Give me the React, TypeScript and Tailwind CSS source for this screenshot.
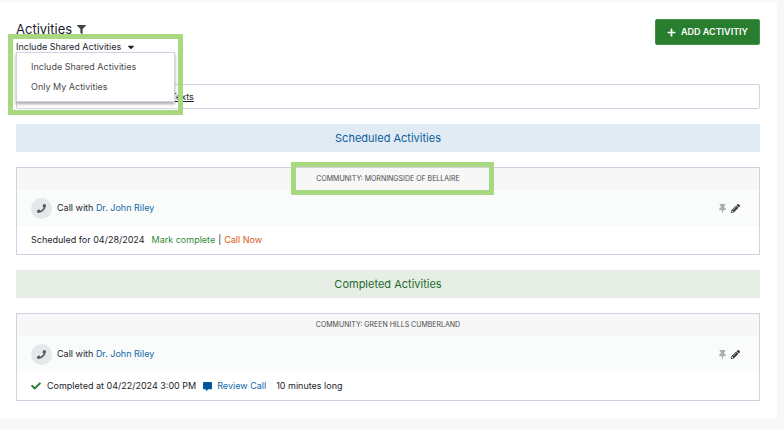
import { useState } from 'react'
import type { ReactNode } from 'react'
import {
  FaCaretDown,
  FaCheck,
  FaCommentAlt,
  FaFilter,
  FaPencilAlt,
  FaPhone,
  FaPlus,
  FaThumbtack,
} from 'react-icons/fa'

const scopes = ['Include Shared Activities', 'Only My Activities']

interface ActivityCardProps {
  community: string
  contact: string
  highlighted?: boolean
  children: ReactNode
}

function ActivityCard({ community, contact, highlighted, children }: ActivityCardProps) {
  return (
    <article className="border border-[#d3d0e2] bg-white">
      <header className="flex h-[22px] items-center justify-center bg-[#f7f7f7]">
        <div className="relative text-[7px] leading-3 text-[#4a4a4a]">
          {community}
          {highlighted && (
            <span className="pointer-events-none absolute -top-[11px] -right-[34px] -bottom-[10px] -left-[25px] border-5 border-[#a8d880]" />
          )}
        </div>
      </header>
      <div className="flex h-9 items-center justify-between bg-[#fafcfb] px-[14px]">
        <div className="flex items-center">
          <span className="mr-[5px] flex size-[21px] items-center justify-center rounded-full bg-[#e4e8eb]">
            <FaPhone className="size-[9px] text-[#5a5a5a]" />
          </span>
          <p>
            Call with{' '}
            <a href="#contact" className="text-[#1467a8]">
              {contact}
            </a>
          </p>
        </div>
        <div className="flex items-center gap-1 pr-[5px]">
          <button type="button" aria-label="Pin activity">
            <FaThumbtack className="size-[9px] text-[#a5adb5]" />
          </button>
          <button type="button" aria-label="Edit activity">
            <FaPencilAlt className="size-[9px] text-[#333333]" />
          </button>
        </div>
      </div>
      <footer className="flex h-7 items-center px-[14px]">{children}</footer>
    </article>
  )
}

export default function App() {
  const [open, setOpen] = useState(true)
  const [scope, setScope] = useState(scopes[0])

  const handleSelect = (value: string) => {
    setScope(value)
    setOpen(false)
  }

  return (
    <div className="min-h-screen bg-[#f8f8f8] pt-0.5 pr-[7px] font-['Inter',sans-serif] text-[9px] leading-4 text-[#1d1d2b]">
      <main className="flex flex-col gap-[15px] bg-white py-[17px] pr-[17px] pl-4">
        <header className="mb-[14px] flex items-start justify-between">
          <div>
            <div className="flex h-5 items-center gap-[5px]">
              <h1 className="text-[13px] leading-5">Activities</h1>
              <button type="button" aria-label="Filter activities">
                <FaFilter className="size-[9px] text-[#444444]" />
              </button>
            </div>
            <div className="relative">
              <button
                type="button"
                aria-haspopup="menu"
                aria-expanded={open}
                onClick={() => setOpen(!open)}
                className="flex items-center gap-[5px]"
              >
                {scope}
                <FaCaretDown className="size-[10px]" />
              </button>
              {open && (
                <ul
                  role="menu"
                  className="absolute top-[13px] left-0 z-10 w-[159px] border border-[#d3d0e2] bg-white py-1 shadow-[0_2px_3px_rgba(0,0,0,0.35)]"
                >
                  {scopes.map((item) => (
                    <li key={item} role="none">
                      <button
                        type="button"
                        role="menuitem"
                        onClick={() => handleSelect(item)}
                        className="h-5 w-full px-[14px] text-left text-[#4a4a4a]"
                      >
                        {item}
                      </button>
                    </li>
                  ))}
                </ul>
              )}
              <span className="pointer-events-none absolute -top-[5px] -left-2 z-20 h-[81px] w-[175px] border-5 border-[#a8d880]" />
            </div>
          </div>
          <button
            type="button"
            className="flex h-[26px] items-center gap-[5px] rounded-xs border border-[#43914a] bg-[#287d2e] px-[11px] font-semibold text-white"
          >
            <FaPlus className="size-[9px]" />
            ADD ACTIVITIY
          </button>
        </header>

        <nav className="flex h-[25px] items-center rounded-xs border border-[#d3d0e2] pl-[154px]">
          <a href="#texts" className="underline">
            Texts
          </a>
        </nav>

        <h2 className="bg-[#e1ebf4] text-center text-[11px] leading-7 text-[#0b5ca0]">Scheduled Activities</h2>
        <ActivityCard community="COMMUNITY: MORNINGSIDE OF BELLAIRE" contact="Dr. John Riley" highlighted>
          <span className="mr-[7px]">Scheduled for 04/28/2024</span>
          <button type="button" className="text-[#2e8a37]">
            Mark complete
          </button>
          <span className="mx-[3px]">|</span>
          <button type="button" className="text-[#d65a12]">
            Call Now
          </button>
        </ActivityCard>

        <h2 className="bg-[#e6eee6] text-center text-[11px] leading-7 text-[#1f6b2a]">Completed Activities</h2>
        <ActivityCard community="COMMUNITY: GREEN HILLS CUMBERLAND" contact="Dr. John Riley">
          <FaCheck className="mr-[6px] size-[10px] text-[#287d2e]" />
          <span className="mr-[7px]">Completed at 04/22/2024 3:00 PM</span>
          <a href="#review" className="mr-[10px] flex items-center gap-[5px] text-[#1467a8]">
            <FaCommentAlt className="size-[9px] text-[#0055a0]" />
            Review Call
          </a>
          <span>10 minutes long</span>
        </ActivityCard>
      </main>
    </div>
  )
}
